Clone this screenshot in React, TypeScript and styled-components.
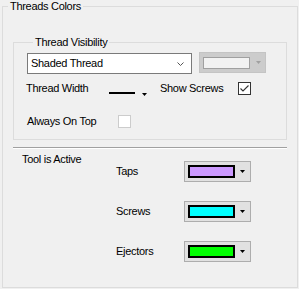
import React from "react";
import styled, { createGlobalStyle } from "styled-components";

const GlobalStyle = createGlobalStyle`
  html, body {
    margin: 0;
    background: #f0f0f0;
  }
  body {
    font-family: "Liberation Sans", Arial, sans-serif;
    font-size: 11px;
    letter-spacing: -0.3px;
    color: #000;
  }
  * {
    box-sizing: border-box;
  }
`;

const Page = styled.div`
  width: 299px;
  height: 289px;
  padding-left: 2px;
`;

const GroupBox = styled.fieldset<{ $outer?: boolean }>`
  margin: ${(p) => (p.$outer ? "0" : "23px 10px 0 10px")};
  padding: ${(p) => (p.$outer ? "0" : "4px 0 11px 12px")};
  border: 1px solid #dcdcdc;
  min-width: 0;
  width: ${(p) => (p.$outer ? "296px" : "auto")};
  height: ${(p) => (p.$outer ? "288px" : "auto")};
`;

const Legend = styled.legend<{ $indent: number }>`
  margin-left: ${(p) => p.$indent}px;
  padding: 0 2px;
  line-height: 13px;
`;

const Row = styled.div<{ $top: number; $left?: number; $align?: string }>`
  display: flex;
  align-items: ${(p) => p.$align ?? "center"};
  margin-top: ${(p) => p.$top}px;
  margin-left: ${(p) => p.$left ?? 0}px;
`;

const Label = styled.span<{ $width?: number; $gap?: number }>`
  display: block;
  line-height: 13px;
  width: ${(p) => (p.$width ? `${p.$width}px` : "auto")};
  margin-left: ${(p) => p.$gap ?? 0}px;
  white-space: nowrap;
`;

const Select = styled.div`
  width: 165px;
  height: 21px;
  border: 1px solid #7a7a7a;
  background: #fff;
  display: flex;
  align-items: center;
  justify-content: space-between;
  padding: 0 7px 0 3px;
  line-height: 13px;
`;

const DisabledCombo = styled.div`
  width: 67px;
  height: 21px;
  margin-top: -1px;
  margin-left: 7px;
  border: 1px solid #c4c4c4;
  background: #cccccc;
  display: flex;
  align-items: center;
  padding-left: 3px;
`;

const Swatch = styled.span<{ $color: string; $disabled?: boolean }>`
  display: block;
  width: 47px;
  height: ${(p) => (p.$disabled ? 12 : 13)}px;
  border: ${(p) => (p.$disabled ? "1px solid #a0a0a0" : "2px solid #000")};
  background: ${(p) => p.$color};
`;

const ArrowBox = styled.span<{ $gap: number; $top?: number }>`
  display: flex;
  margin-left: ${(p) => p.$gap}px;
  margin-top: ${(p) => p.$top ?? 0}px;
`;

const LinePicker = styled.div`
  display: flex;
  align-items: flex-start;
  height: 13px;
  padding-top: 10px;
`;

const LineSample = styled.span`
  display: block;
  width: 26px;
  height: 2px;
  background: #000;
`;

const CheckBox = styled.span<{ $disabled?: boolean }>`
  display: flex;
  align-items: center;
  justify-content: center;
  width: 13px;
  height: 13px;
  border: 1px solid ${(p) => (p.$disabled ? "#cccccc" : "#333333")};
  background: #fff;
`;

const Separator = styled.div`
  margin: 7px 10px 0 10px;
  border-top: 1px solid #a0a0a0;
  border-bottom: 1px solid #fff;
`;

const Section = styled.div`
  display: flex;
`;

const SectionTitle = styled.div`
  width: 113px;
  padding: 4px 0 0 19px;
  line-height: 13px;
`;

const ColorGrid = styled.div`
  display: grid;
  grid-template-columns: 68px 67px;
  grid-auto-rows: 21px;
  row-gap: 19px;
  align-items: center;
  padding-top: 12px;
`;

const ColorCombo = styled.div`
  height: 21px;
  border: 1px solid #adadad;
  background: #e1e1e1;
  display: flex;
  align-items: center;
  padding-left: 3px;
`;

const Arrow = ({ color = "#000" }: { color?: string }) => (
  <svg width="5" height="3" viewBox="0 0 5 3">
    <polygon points="0,0 5,0 2.5,3" fill={color} />
  </svg>
);

const Chevron = () => (
  <svg width="7" height="4" viewBox="0 0 7 4">
    <polyline points="0.5,0.5 3.5,3.5 6.5,0.5" fill="none" stroke="#555" strokeWidth="1" />
  </svg>
);

const Check = () => (
  <svg width="11" height="11" viewBox="0 0 11 11">
    <polyline points="1.5,5.5 4,8 9.5,2.5" fill="none" stroke="#333" strokeWidth="1.1" />
  </svg>
);

const colors = [
  { name: "Taps", color: "#cc99ff" },
  { name: "Screws", color: "#00ffff" },
  { name: "Ejectors", color: "#00ff00" },
];

const App = () => {
  return (
    <Page>
      <GlobalStyle />
      <GroupBox $outer>
        <Legend $indent={5}>Threads Colors</Legend>
        <GroupBox>
          <Legend $indent={7}>Thread Visibility</Legend>
          <Row $top={0} $left={1} $align="flex-start">
            <Select>
              <span>Shaded Thread</span>
              <Chevron />
            </Select>
            <DisabledCombo>
              <Swatch $color="#f2f2f2" $disabled />
              <ArrowBox $gap={6}>
                <Arrow color="#a0a0a0" />
              </ArrowBox>
            </DisabledCombo>
          </Row>
          <Row $top={8}>
            <Label $width={83}>Thread Width</Label>
            <LinePicker>
              <LineSample />
              <ArrowBox $gap={7} $top={1}>
                <Arrow />
              </ArrowBox>
            </LinePicker>
            <Label $width={78} $gap={13}>Show Screws</Label>
            <CheckBox>
              <Check />
            </CheckBox>
          </Row>
          <Row $top={20} $left={1}>
            <Label $width={91}>Always On Top</Label>
            <CheckBox $disabled />
          </Row>
        </GroupBox>
        <Separator />
        <Section>
          <SectionTitle>Tool is Active</SectionTitle>
          <ColorGrid>
            {colors.map((c) => (
              <React.Fragment key={c.name}>
                <Label>{c.name}</Label>
                <ColorCombo>
                  <Swatch $color={c.color} />
                  <ArrowBox $gap={5}>
                    <Arrow />
                  </ArrowBox>
                </ColorCombo>
              </React.Fragment>
            ))}
          </ColorGrid>
        </Section>
      </GroupBox>
    </Page>
  );
};

export default App;
